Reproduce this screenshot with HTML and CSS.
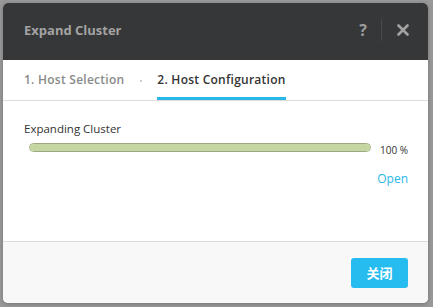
FILE: index.html
```html
<!DOCTYPE html>
<html lang="en">
<head>
    <meta charset="UTF-8">
    <title>Expand Cluster</title>
    <link rel="stylesheet" href="styles.css">
</head>
<body>

<div class="modal">
    <header class="modal-header">
        <h1>Expand Cluster</h1>
        <div class="header-actions">
            <span class="help">?</span>
            <span class="divider"></span>
            <svg class="close" width="12" height="12" viewBox="0 0 12 12">
                <path d="M1.5 1.5 L10.5 10.5 M10.5 1.5 L1.5 10.5" stroke="#a3a3a3" stroke-width="2.6" stroke-linecap="round"/>
            </svg>
        </div>
    </header>

    <nav class="steps">
        <span class="step">1. Host Selection</span>
        <span class="dot"></span>
        <span class="step active">2. Host Configuration</span>
    </nav>

    <main class="modal-body">
        <div class="task-label">Expanding Cluster</div>
        <div class="progress-row">
            <div class="progress"><div class="progress-fill" style="width: 100%;"></div></div>
            <span class="percent">100 %</span>
        </div>
        <div class="link-row"><a href="#">Open</a></div>
    </main>

    <footer class="modal-footer">
        <button>关闭</button>
    </footer>
</div>

</body>
</html>
```

FILE: styles.css
```css
body {
    margin: 0;
    padding: 3px 5px 4px 3px;
    background-color: #999;
    font-family: 'Open Sans', 'Noto Sans CJK SC', sans-serif;
}

.modal {
    width: 425px;
    height: 300px;
    background-color: #fff;
    border-radius: 5px;
    overflow: hidden;
    display: flex;
    flex-direction: column;
    box-shadow: 0 1px 4px rgba(0, 0, 0, 0.25);
}

.modal-header {
    height: 57px;
    box-sizing: border-box;
    background-color: #363738;
    display: flex;
    align-items: center;
    justify-content: space-between;
    padding: 0 19px 4px 21px;
}

.modal-header h1 {
    margin: 0;
    font-size: 13px;
    font-weight: 700;
    color: #a3a3a3;
}

.header-actions {
    display: flex;
    align-items: center;
}

.help {
    font-size: 16px;
    font-weight: 700;
    color: #9c9c9c;
}

.divider {
    width: 1px;
    height: 22px;
    background-color: #4a4b4c;
    margin: 0 15px 0 14px;
}

.close {
    display: block;
}

.steps {
    height: 40px;
    display: flex;
    align-items: center;
    padding: 0 21px;
    border-bottom: 1px solid #dcdcdc;
}

.step {
    font-size: 12px;
    font-weight: 600;
    letter-spacing: 0.25px;
    color: #8a8a8a;
    height: 40px;
    line-height: 40px;
    box-sizing: border-box;
}

.step.active {
    color: #333;
    border-bottom: 3px solid #29b6e8;
}

.dot {
    width: 2px;
    height: 2px;
    background-color: #ccc;
    margin: 2px 15px 0 16px;
}

.modal-body {
    flex: 1;
    padding: 20px 20px 0 21px;
}

.task-label {
    font-size: 11.5px;
    color: #333;
}

.progress-row {
    display: flex;
    align-items: center;
    margin-top: 2px;
    padding-left: 5px;
}

.progress {
    flex: none;
    width: 340px;
    height: 7px;
    border: 1px solid #9ea982;
    border-radius: 5px;
    background-color: #eee;
    overflow: hidden;
}

.progress-fill {
    height: 100%;
    background-color: #c4d6a1;
}

.percent {
    font-size: 10px;
    color: #333;
    white-space: nowrap;
    margin-left: 9px;
    margin-top: 5px;
}

.link-row {
    text-align: right;
    margin-top: 9px;
}

.link-row a {
    font-size: 12px;
    color: #29b6e8;
    text-decoration: none;
}

.modal-footer {
    height: 61px;
    background-color: #f8f8f8;
    border-top: 1px solid #dcdcdc;
    display: flex;
    align-items: center;
    justify-content: flex-end;
    padding: 0 20px;
}

button {
    width: 57px;
    height: 30px;
    border: none;
    border-radius: 3px;
    background-color: #27bcef;
    color: #fff;
    font-family: 'Noto Sans CJK SC', sans-serif;
    font-size: 13px;
    font-weight: 700;
    cursor: pointer;
}
```
